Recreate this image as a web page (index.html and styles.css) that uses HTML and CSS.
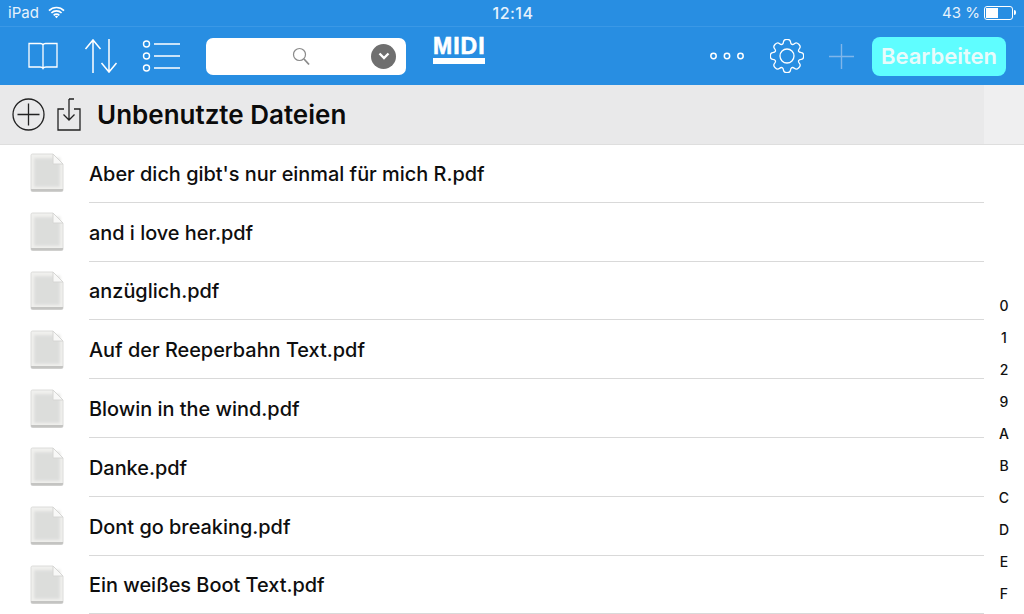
FILE: index.html
```html
<!DOCTYPE html>
<html lang="en">
<head>
    <meta charset="UTF-8">
    <meta name="viewport" content="width=device-width, initial-scale=1.0">
    <title>Unbenutzte Dateien</title>
    <link rel="stylesheet" href="styles.css">
</head>
<body>
    <div class="status-bar">
        <div class="status-left">
            <span>iPad</span>
            <svg class="wifi" width="17" height="13" viewBox="0 0 17 13">
                <path d="M1 4.600a10.600 10.600 0 0 1 15 0M3.400 7a7.200 7.200 0 0 1 10.200 0M5.700 9.300a3.900 3.900 0 0 1 5.600 0" fill="none" stroke="#fff" stroke-width="1.700"/>
                <path d="M6.900 10.600a2.200 2.200 0 0 1 3.200 0L8.500 12.300z" fill="#fff"/>
            </svg>
        </div>
        <div class="status-time">12:14</div>
        <div class="status-right">
            <span>43 %</span>
            <div class="battery"><div class="battery-fill"></div></div>
            <div class="battery-tip"></div>
        </div>
    </div>

    <div class="toolbar">
        <svg class="icon-book" width="30" height="28" viewBox="0 0 30 28" fill="none" stroke="#fff" stroke-width="1.300">
            <path d="M1 1.500h11.500c1.300 0 2.200.6 2.500 1.500.3-.9 1.200-1.500 2.500-1.500H29v23.500H18c-1.500 0-2.500.5-3 1.500-.5-1-1.500-1.500-3-1.500H1zM15 3v23"/>
        </svg>
        <svg class="icon-sort" width="34" height="36" viewBox="0 0 34 36" fill="none" stroke="#fff" stroke-width="1.500">
            <path d="M9 35V2M1.500 11 9 2l7.500 9M25 1v33M17.500 25l7.500 9 7.500-9"/>
        </svg>
        <svg class="icon-list" width="38" height="32" viewBox="0 0 38 32" fill="none" stroke="#fff" stroke-width="1.400">
            <circle cx="4.500" cy="4" r="3"/><circle cx="4.500" cy="16" r="3"/><circle cx="4.500" cy="28" r="3"/>
            <path d="M12 4h26M12 16h26M12 28h26"/>
        </svg>
        <div class="search-box">
            <svg class="icon-search" width="18" height="19" viewBox="0 0 18 19" fill="none" stroke="#8a8a8a">
                <circle cx="7.500" cy="7.500" r="6" stroke-width="1.200"/>
                <path d="M12 12l5 5.500" stroke-width="1.800"/>
            </svg>
            <div class="search-toggle">
                <svg width="12" height="8" viewBox="0 0 12 8" fill="none" stroke="#fff" stroke-width="2.400"><path d="M1.500 1.500 6 6l4.500-4.500"/></svg>
            </div>
        </div>
        <div class="midi-logo">
            <span>MIDI</span>
            <div class="midi-bar"></div>
        </div>

        <div class="toolbar-right">
            <svg class="icon-dots" width="36" height="10" viewBox="0 0 36 10" fill="none" stroke="#fff" stroke-width="1.500">
                <circle cx="4.500" cy="5" r="2.700"/><circle cx="18" cy="5" r="2.700"/><circle cx="31.500" cy="5" r="2.700"/>
            </svg>
            <svg class="icon-gear" width="34" height="34" viewBox="0 0 34 34" fill="none" stroke="#fff" stroke-width="1.300">
                <circle cx="17" cy="17" r="7"/>
                <path id="gearPath"/>
            </svg>
            <svg class="icon-plus" width="25" height="25" viewBox="0 0 25 25" fill="none" stroke="#7fb6ea" stroke-width="1.400">
                <path d="M12.500 0v25M0 12.500h25"/>
            </svg>
            <button class="edit-btn">Bearbeiten</button>
        </div>
    </div>

    <div class="section-head">
        <div class="section-title-wrap">
            <svg class="icon-add" width="33" height="33" viewBox="0 0 33 33" fill="none" stroke="#222" stroke-width="1.300">
                <circle cx="16.500" cy="16.500" r="15.500"/>
                <path d="M16.500 5.500v22M5.500 16.500h22"/>
            </svg>
            <svg class="icon-import" width="24" height="33" viewBox="0 0 24 33" fill="none" stroke="#222" stroke-width="1.300">
                <path d="M7 11H1v21h22V11h-6M12 1v21M6.500 16.500 12 22l5.500-5.500M12 1h5"/>
            </svg>
            <h1>Unbenutzte Dateien</h1>
        </div>
        <div class="section-side"></div>
    </div>

    <div class="content">
        <ul class="file-list" id="fileList"></ul>
        <div class="index-bar">
            <span>0</span><span>1</span><span>2</span><span>9</span><span>A</span>
            <span>B</span><span>C</span><span>D</span><span>E</span><span>F</span>
        </div>
    </div>

    <script>
        const files = [
            "Aber dich gibt's nur einmal für mich R.pdf",
            "and i love her.pdf",
            "anzüglich.pdf",
            "Auf der Reeperbahn Text.pdf",
            "Blowin in the wind.pdf",
            "Danke.pdf",
            "Dont go breaking.pdf",
            "Ein weißes Boot Text.pdf"
        ];

        const list = document.getElementById('fileList');
        files.forEach((name) => {
            const row = document.createElement('li');
            row.className = 'file-row';
            row.innerHTML = `
                <svg class="file-icon" width="34" height="39" viewBox="0 0 34 39">
                    <path d="M1 2.500Q1 1 2.500 1H23l10 10v26q0 1.500-1.500 1.500h-29Q1 38.500 1 37z" fill="#f1f1ef" stroke="#dcdcda"/>
                    <rect class="file-icon-inner" x="4" y="5" width="26" height="29" fill="#dcdddb"/>
                    <path d="M1 36v1q0 1.500 1.500 1.500h29q1.500 0 1.500-1.500v-1z" fill="#c4c4c2"/>
                    <path d="M23 1v10h10z" fill="#f8f8f7" stroke="#d6d6d4"/>
                </svg>
                <div class="file-name">${name}</div>`;
            list.appendChild(row);
        });

        // Gear outline, corners rounded with quadratic curves
        const points = [];
        for (let k = 0; k < 8; k++) {
            [[-17, 12.6], [-11, 17], [11, 17], [17, 12.6]].forEach(([offset, radius]) => {
                const angle = (k * 45 + offset - 90) * Math.PI / 180;
                points.push([17 + radius * Math.cos(angle), 17 + radius * Math.sin(angle)]);
            });
        }
        const mid = (a, b) => `${((a[0] + b[0]) / 2).toFixed(2)} ${((a[1] + b[1]) / 2).toFixed(2)}`;
        let gear = `M${mid(points[points.length - 1], points[0])}`;
        points.forEach((p, i) => {
            gear += `Q${p[0].toFixed(2)} ${p[1].toFixed(2)} ${mid(p, points[(i + 1) % points.length])}`;
        });
        document.getElementById('gearPath').setAttribute('d', gear + 'Z');
    </script>
</body>
</html>
```

FILE: styles.css
```css
* { box-sizing: border-box; }
html, body { height: 100%; }
body { margin: 0; height: 614px; overflow: hidden; background: white; color: #111; font-family: Inter, "Noto Sans", sans-serif; }

.status-bar { height: 27px; background: #288ee2; border-bottom: 1px solid #3a98e6; color: #e6f2fc; font-size: 15px; display: grid; grid-template-columns: 1fr auto 1fr; align-items: center; padding: 0 8px 1px; }
.status-left { display: flex; align-items: center; gap: 9px; }
.status-time { font-weight: 500; font-size: 16px; letter-spacing: 0.5px; margin-left: 2px; }
.status-right { display: flex; align-items: center; justify-content: flex-end; }
.battery { width: 29px; height: 14px; border: 1px solid #fff; border-radius: 3px; padding: 1px; margin-left: 4px; }
.battery-fill { width: 12px; height: 100%; background: #fff; }
.battery-tip { width: 2px; height: 5px; background: #fff; border-radius: 0 2px 2px 0; margin-left: 1px; }

.toolbar { height: 58px; background: #288ee2; display: flex; align-items: center; padding: 0 18px 0 28px; }
.icon-sort { margin-left: 26px; }
.icon-list { margin-left: 24px; }
.search-box { width: 200px; height: 37px; margin-left: 26px; background: white; border-radius: 7px; position: relative; display: flex; align-items: center; justify-content: center; }
.icon-search { margin-right: 10px; }
.search-toggle { position: absolute; right: 10px; top: 6px; width: 25px; height: 25px; border-radius: 50%; background: #6f6f6f; display: flex; align-items: center; justify-content: center; }
.midi-logo { margin-left: 27px; width: 52px; align-self: flex-start; padding-top: 10px; color: white; display: flex; flex-direction: column; align-items: stretch; }
.midi-logo span { font-family: "Liberation Sans", sans-serif; font-weight: 700; font-size: 23px; line-height: 18px; letter-spacing: 1px; white-space: nowrap; -webkit-text-stroke: 0.6px white; }
.midi-bar { height: 6px; background: white; margin-top: 3px; }
.toolbar-right { margin-left: auto; display: flex; align-items: center; }
.icon-gear { margin-left: 25px; }
.icon-plus { margin-left: 25px; }
.edit-btn { width: 134px; height: 39px; margin-left: 18px; border: none; border-radius: 8px; background: #5ffdff; color: #e8fbfb; font-family: inherit; font-size: 22px; font-weight: 600; padding: 0; }

.section-head { height: 60px; background: #e9e9ea; border-bottom: 1px solid #dedede; display: flex; }
.section-title-wrap { flex: 1; display: flex; align-items: center; padding-left: 12px; }
.section-side { width: 40px; background: #efeff0; }
.icon-import { margin-left: 12px; }
h1 { margin: 0 0 0 16px; font-size: 26px; font-weight: 600; color: #0b0b0b; }

.content { display: flex; margin-top: -1px; }
.file-list { flex: 1; list-style: none; margin: 0; padding: 0; }
.file-row { height: 58.800px; display: flex; align-items: center; }
.file-icon { margin-left: 30px; flex: none; margin-top: -1px; }
.file-icon-inner { filter: blur(1.5px); }
.file-name { flex: 1; align-self: stretch; margin-left: 25px; padding-top: 2px; display: flex; align-items: center; border-bottom: 1px solid #d9d9d9; font-size: 19.900px; font-weight: 500; color: #0e0e0e; }
.index-bar { width: 40px; padding-top: 146px; display: flex; flex-direction: column; align-items: center; font-size: 14px; font-weight: 500; }
.index-bar span { height: 32px; line-height: 32px; }
```
